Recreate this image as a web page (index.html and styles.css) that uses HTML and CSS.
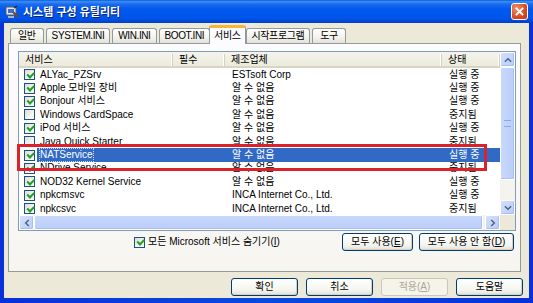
FILE: index.html
```html
<!DOCTYPE html>
<html lang="ko">
<head>
<meta charset="utf-8">
<title>시스템 구성 유틸리티</title>
<link rel="stylesheet" href="styles.css">
</head>
<body>
<div class="window">
  <div class="titlebar">
    <svg class="ticon" viewBox="0 0 14 14">
      <rect x="1" y="2" width="10" height="8" rx="1" fill="#E8E8E8" stroke="#5A5A6A" stroke-width="1"/>
      <rect x="3" y="4" width="6" height="4" fill="#3A6FD8"/>
      <rect x="3" y="11" width="6" height="2" fill="#B0B0B8"/>
      <path d="M8 7 L13 12" stroke="#6B4A1E" stroke-width="2"/>
      <path d="M9 3 L12 1" stroke="#222" stroke-width="1.4"/>
    </svg>
    <span class="title">시스템 구성 유틸리티</span>
    <span class="close"><svg viewBox="0 0 11 11"><path d="M2.5 2.5L8.5 8.5M8.5 2.5L2.5 8.5" stroke="#fff" stroke-width="1.8" stroke-linecap="square"/></svg></span>
  </div>
  <div class="frame">
    <div class="tabs">
      <span class="tab t1">일반</span>
      <span class="tab">SYSTEM.INI</span>
      <span class="tab">WIN.INI</span>
      <span class="tab">BOOT.INI</span>
      <span class="tab sel">서비스</span>
      <span class="tab">시작프로그램</span>
      <span class="tab t1">도구</span>
    </div>
    <div class="panel">
      <div class="listview">
        <div class="lv-view">
          <div class="lv-head">
            <span class="hc">서비스</span><span class="hc">필수</span><span class="hc">제조업체</span><span class="hc">상태</span>
          </div>
          <div class="lv-rows">
            <div class="row"><span class="c1"><i class="cb on"></i>ALYac_PZSrv</span><span></span><span class="c3">ESTsoft Corp</span><span class="c4">실행 중</span></div>
            <div class="row"><span class="c1"><i class="cb on"></i>Apple 모바일 장비</span><span></span><span class="c3">알 수 없음</span><span class="c4">실행 중</span></div>
            <div class="row"><span class="c1"><i class="cb on"></i>Bonjour 서비스</span><span></span><span class="c3">알 수 없음</span><span class="c4">실행 중</span></div>
            <div class="row"><span class="c1"><i class="cb"></i>Windows CardSpace</span><span></span><span class="c3">알 수 없음</span><span class="c4">중지됨</span></div>
            <div class="row"><span class="c1"><i class="cb on"></i>iPod 서비스</span><span></span><span class="c3">알 수 없음</span><span class="c4">실행 중</span></div>
            <div class="row"><span class="c1"><i class="cb"></i>Java Quick Starter</span><span></span><span class="c3">알 수 없음</span><span class="c4">중지됨</span></div>
            <div class="row selected"><span class="c1"><i class="cb on"></i><span class="focus">NATService</span></span><span></span><span class="c3">알 수 없음</span><span class="c4">실행 중</span></div>
            <div class="row"><span class="c1"><i class="cb on"></i>NDrive Service</span><span></span><span class="c3">알 수 없음</span><span class="c4">중지됨</span></div>
            <div class="row"><span class="c1"><i class="cb on"></i>NOD32 Kernel Service</span><span></span><span class="c3">알 수 없음</span><span class="c4">실행 중</span></div>
            <div class="row"><span class="c1"><i class="cb on"></i>npkcmsvc</span><span></span><span class="c3">INCA Internet Co., Ltd.</span><span class="c4">실행 중</span></div>
            <div class="row"><span class="c1"><i class="cb on"></i>npkcsvc</span><span></span><span class="c3">INCA Internet Co., Ltd.</span><span class="c4">중지됨</span></div>
          </div>
        </div>
        <div class="vscroll">
          <span class="sbtn"><svg viewBox="0 0 9 6"><path d="M1 5L4.5 1.5L8 5" fill="none" stroke="#4D6185" stroke-width="1.6"/></svg></span>
          <span class="vthumb"><i></i></span>
          <span class="track"></span>
          <span class="sbtn"><svg viewBox="0 0 9 6"><path d="M1 1L4.5 4.5L8 1" fill="none" stroke="#4D6185" stroke-width="1.6"/></svg></span>
        </div>
        <div class="hscroll">
          <span class="sbtn"><svg viewBox="0 0 6 9"><path d="M5 1L1.5 4.5L5 8" fill="none" stroke="#4D6185" stroke-width="1.6"/></svg></span>
          <span class="hthumb"></span>
          <span class="sbtn"><svg viewBox="0 0 6 9"><path d="M1 1L4.5 4.5L1 8" fill="none" stroke="#4D6185" stroke-width="1.6"/></svg></span>
        </div>
        <div class="corner"></div>
      </div>
      <div class="options">
        <label class="hide"><i class="cb on"></i>모든 Microsoft 서비스 숨기기(<u>I</u>)</label>
        <span class="btn w71">모두 사용(<u>E</u>)</span>
        <span class="btn w95">모두 사용 안 함(<u>D</u>)</span>
      </div>
    </div>
    <div class="footer">
      <span class="btn fb">확인</span>
      <span class="btn fb">취소</span>
      <span class="btn fb disabled">적용(<u>A</u>)</span>
      <span class="btn fb">도움말</span>
    </div>
  </div>
  <div class="mark"></div>
</div>
</body>
</html>
```

FILE: styles.css
```css
* { box-sizing: border-box; margin: 0; padding: 0; }
html, body { width: 533px; height: 303px; overflow: hidden; }
body {
  font-family: "Liberation Sans", "Noto Sans CJK KR", sans-serif;
  font-size: 10px;
  line-height: 12px;
  color: #000;
  background: #fff;
}
.window {
  position: relative;
  width: 533px;
  height: 303px;
  display: flex;
  flex-direction: column;
  background: linear-gradient(90deg, #0831D9, #0A4AE0 50%, #0831D9);
}
.titlebar {
  height: 23px;
  display: flex;
  align-items: center;
  padding: 0 5px 0 5px;
  background: linear-gradient(#0A5BD9 0%, #3D8DF5 7%, #1A6BEE 18%, #0058EE 40%, #0056EB 78%, #0049DA 90%, #0040C8 100%);
  color: #fff;
}
.ticon { width: 14px; height: 14px; margin-right: 4px; flex: none; }
.title {
  flex: 1;
  font-weight: bold;
  font-size: 11px;
  text-shadow: 1px 1px 0 #0A1E6E;
}
.close {
  width: 17px;
  height: 17px;
  border: 1px solid #fff;
  border-radius: 3px;
  background: radial-gradient(circle at 30% 30%, #F0906C, #DA4A22 60%, #C4350E);
  display: flex;
  align-items: center;
  justify-content: center;
}
.close svg { width: 11px; height: 11px; }
.frame {
  flex: 1;
  margin: 0 4px 5px 4px;
  background: #ECE9D8;
  padding-top: 2px;
  display: flex;
  flex-direction: column;
}
.tabs {
  height: 18px;
  display: flex;
  align-items: flex-end;
  padding-left: 6px;
  position: relative;
  z-index: 1;
}
.tab {
  height: 15px;
  padding: 0 5px;
  margin-right: 2px;
  border: 1px solid #919B9C;
  border-bottom: none;
  border-radius: 3px 3px 0 0;
  background: linear-gradient(#FFFFFF, #F3F2ED 60%, #E3E1D8);
  display: flex;
  align-items: center;
  white-space: nowrap;
  letter-spacing: -0.4px;
}
.tab.t1 { padding: 0 7px; }
.tab.sel {
  height: 19px;
  margin: 0 0 -1px -3px;
  padding: 0 4px 1px;
  border-top: 3px solid #F5B63A;
  background: #FCFCFE;
}
.panel {
  margin-left: 4px;
  width: 513px;
  height: 229px;
  border: 1px solid #919B9C;
  background: linear-gradient(#FCFCFE, #F6F5F0);
  padding: 7px 6px 0 9px;
}
.listview {
  width: 498px;
  height: 180px;
  border: 1px solid #7F9DB9;
  background: #fff;
  display: grid;
  grid-template-columns: 481px 15px;
  grid-template-rows: 163px 15px;
}
.lv-view { overflow: hidden; }
.lv-head {
  height: 16px;
  display: grid;
  grid-template-columns: 154px 52px 217px 58px;
  background: linear-gradient(#F5F4EC, #EBEADB);
  border-bottom: 2px solid #D8D5C5;
}
.hc {
  padding-left: 6px;
  border-right: 1px solid #D3D0C1;
  box-shadow: inset -1px 0 0 #fff;
  margin: 2px 0 1px;
  display: flex;
  align-items: center;
  white-space: nowrap;
}
.lv-rows { height: 147px; overflow: hidden; }
.row {
  height: 13.4px;
  display: grid;
  grid-template-columns: 154px 52px 217px 58px;
  align-items: center;
  white-space: nowrap;
}
.row.selected {
  background: linear-gradient(90deg, transparent 18px, #316AC5 18px);
  color: #fff;
}
.c1 { display: flex; align-items: center; padding-left: 5px; }
.c3, .c4 { padding-left: 7px; overflow: hidden; }
.focus { outline: 1px dotted #C8D8F0; }
.cb {
  position: relative;
  width: 11px;
  height: 11px;
  margin-right: 5px;
  border: 1px solid #1C5180;
  background: linear-gradient(135deg, #DCDBD5, #F8F8F6 70%, #fff);
  flex: none;
  display: inline-block;
}
.cb.on::after {
  content: "";
  position: absolute;
  left: 1.5px;
  top: 1.5px;
  width: 5px;
  height: 2.5px;
  border-left: 2px solid #21A121;
  border-bottom: 2px solid #21A121;
  transform: rotate(-45deg);
}
.vscroll {
  display: flex;
  flex-direction: column;
  background: #F4F3EE;
}
.hscroll {
  display: flex;
  background: #F4F3EE;
}
.corner { background: #ECE9D8; }
.sbtn {
  flex: none;
  width: 15px;
  height: 15px;
  border: 1px solid #fff;
  border-radius: 2px;
  background: linear-gradient(135deg, #D3E0FD, #BACDF8);
  box-shadow: inset -1px -1px 0 #A7BEEF;
  display: flex;
  align-items: center;
  justify-content: center;
}
.sbtn svg { width: 8px; height: 8px; }
.vthumb {
  height: 113px;
  border: 1px solid #fff;
  border-radius: 2px;
  background: linear-gradient(90deg, #C9D8FC, #BBCEF9);
  box-shadow: inset -1px -1px 0 #A9C0F0;
  display: flex;
  align-items: center;
  justify-content: center;
}
.vthumb i {
  width: 7px;
  height: 7px;
  border-top: 1px solid #8CA7E6;
  border-bottom: 1px solid #8CA7E6;
}
.track { flex: 1; }
.hthumb {
  flex: 1;
  margin-right: 2px;
  border: 1px solid #fff;
  border-radius: 2px;
  background: linear-gradient(#C9D8FC, #BBCEF9);
  box-shadow: inset -1px -1px 0 #A9C0F0;
}
.options {
  margin-top: 2px;
  display: flex;
  align-items: center;
  padding-left: 116px;
  gap: 6px;
}
.hide {
  display: flex;
  align-items: center;
  margin-right: auto;
  white-space: nowrap;
}
.hide .cb { margin-right: 3px; }
.btn {
  height: 18px;
  border: 1px solid #003C74;
  border-radius: 3px;
  background: linear-gradient(#FFFFFF, #F4F4EF 70%, #E3E0D4);
  box-shadow: inset -1px -1px 0 #D6D0C5;
  display: flex;
  align-items: center;
  justify-content: center;
  white-space: nowrap;
}
.w71 { width: 71px; }
.w95 { width: 95px; }
.footer {
  display: flex;
  justify-content: flex-end;
  gap: 8px;
  padding: 6px 6px 0 0;
}
.fb { width: 67px; }
.btn.disabled {
  color: #ACA899;
  border-color: #C9C7BA;
  background: #F5F4EA;
  box-shadow: none;
}
.mark {
  position: absolute;
  left: 17px;
  top: 144px;
  width: 470px;
  height: 27px;
  border: 3px solid #D9222A;
}
```
